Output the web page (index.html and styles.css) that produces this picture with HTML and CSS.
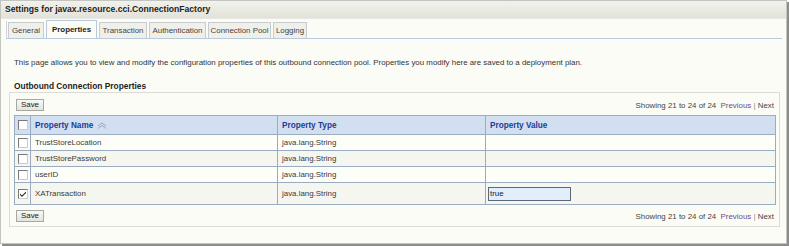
FILE: index.html
```html
<!DOCTYPE html>
<html>
<head>
<meta charset="utf-8">
<link rel="stylesheet" href="styles.css">
</head>
<body>
<div class="frame">
  <div class="titlebar">Settings for javax.resource.cci.ConnectionFactory</div>
  <div class="tabs">
    <span class="tab t1">General</span>
    <span class="tab t2 active">Properties</span>
    <span class="tab t3">Transaction</span>
    <span class="tab t4">Authentication</span>
    <span class="tab t5">Connection Pool</span>
    <span class="tab t6">Logging</span>
  </div>
  <p class="intro">This page allows you to view and modify the configuration properties of this outbound connection pool. Properties you modify here are saved to a deployment plan.</p>
  <h2 class="section">Outbound Connection Properties</h2>
  <div class="panel">
    <div class="toolbar">
      <span class="btn">Save</span>
      <span class="pager">Showing 21 to 24 of 24 &nbsp;<span class="prev">Previous</span> <span class="sep">|</span> <span class="next">Next</span></span>
    </div>
    <table class="grid">
      <colgroup><col class="c0"><col class="c1"><col class="c2"><col class="c3"></colgroup>
      <thead>
        <tr>
          <th class="chk"><span class="cb"></span></th>
          <th>Property Name <svg class="sort" width="10" height="7" viewBox="0 0 10 7"><path d="M1 4 L5 1 L9 4 M1 6.5 L5 3.5 L9 6.5" fill="none" stroke="#9aa6c0" stroke-width="1"/></svg></th>
          <th>Property Type</th>
          <th>Property Value</th>
        </tr>
      </thead>
      <tbody>
        <tr class="r1"><td class="chk"><span class="cb"></span></td><td>TrustStoreLocation</td><td>java.lang.String</td><td></td></tr>
        <tr class="r2"><td class="chk"><span class="cb"></span></td><td>TrustStorePassword</td><td>java.lang.String</td><td></td></tr>
        <tr class="r1"><td class="chk"><span class="cb"></span></td><td>userID</td><td>java.lang.String</td><td></td></tr>
        <tr class="r2 tall"><td class="chk"><span class="cb checked"><svg width="8" height="8" viewBox="0 0 8 8"><path d="M1 3.5 L3 5.5 L7 1.5 L7 3 L3 7 L1 5 Z" fill="#222"/></svg></span></td><td>XATransaction</td><td>java.lang.String</td><td><span class="field">true</span></td></tr>
      </tbody>
    </table>
    <div class="toolbar bottom">
      <span class="btn">Save</span>
      <span class="pager">Showing 21 to 24 of 24 &nbsp;<span class="prev">Previous</span> <span class="sep">|</span> <span class="next">Next</span></span>
    </div>
  </div>
</div>
</body>
</html>
```
FILE: styles.css
```css
html, body { margin: 0; padding: 0; background: #ffffff; }
body {
  font-family: "Liberation Sans", Arial, sans-serif;
  font-size: 7.9px;
  color: #333;
  width: 789px;
  height: 246px;
  overflow: hidden;
}
.frame {
  box-sizing: border-box;
  width: 787px;
  height: 244px;
  border: 1px solid #c4c4c0;
  background: #fcfcf6;
  box-shadow: 2px 2px 0 #8c8c8c;
}
.titlebar {
  height: 17px;
  line-height: 17px;
  padding-left: 4px;
  font-weight: bold;
  font-size: 8.6px;
  color: #222;
  background: linear-gradient(#f2f2ec, #e2e2da);
  border-bottom: 1px solid #e8e8e2;
}
.tabs {
  display: flex;
  align-items: flex-end;
  gap: 2px;
  margin: 2px 4px 0 5px;
  padding-left: 1px;
  height: 17px;
  border-bottom: 1px solid #b8cadc;
  border-left: 1px solid #cfd4d8;
}
.tab {
  box-sizing: border-box;
  height: 16px;
  line-height: 15px;
  border: 1px solid #c8ccd0;
  border-bottom: none;
  background: #f0f0ea;
  color: #444;
  text-align: center;
}
.tab.active {
  height: 18px;
  line-height: 18px;
  background: #fcfcf6;
  font-weight: bold;
  color: #222;
  border-color: #b8c8d8;
}
.t1 { width: 36px; }
.t2 { width: 51px; }
.t3 { width: 48px; }
.t4 { width: 57px; }
.t5 { width: 63px; }
.t6 { width: 34px; }
.intro {
  margin: 19px 0 0 13px;
  line-height: 10px;
  color: #333;
}
.section {
  margin: 13px 0 0 13px;
  font-size: 8.4px;
  line-height: 10px;
  font-weight: bold;
  color: #1e1e1e;
}
.panel {
  box-sizing: border-box;
  margin: 1px 6px 0 8px;
  height: 135px;
  border: 1px solid #dcdcd4;
  padding: 6px 3px 0 4px;
}
.toolbar {
  display: flex;
  justify-content: space-between;
  align-items: center;
  height: 12px;
  margin-left: 2px;
  margin-right: 2px;
}
.toolbar.bottom { margin-top: 5px; }
.btn {
  box-sizing: border-box;
  width: 28px;
  height: 12px;
  line-height: 10px;
  text-align: center;
  border: 1px solid #a8a8a2;
  background: linear-gradient(#f8f8f4, #e4e4de);
  color: #222;
}
.pager { color: #444; white-space: pre; }
.prev { color: #6a4c8c; }
.sep { color: #888; }
.next { color: #444; }
.grid {
  margin-top: 4px;
  width: 762px;
  border-collapse: collapse;
  border: 1px solid #8a9cb4;
}
.c0 { width: 16px; }
.c1 { width: 247px; }
.c2 { width: 208px; }
.grid th, .grid td {
  border: 1px solid #9aacc2;
  padding: 0 0 0 4px;
  text-align: left;
  vertical-align: middle;
  box-sizing: border-box;
}
.grid th {
  height: 19px;
  background: #d2dff0;
  color: #1f3a96;
  font-weight: bold;
  font-size: 8.2px;
}
.grid td { height: 16px; color: #3a3a3a; }
.grid tr.tall td { height: 22px; }
.r1 td { background: #fefef9; }
.r2 td { background: #f6f6f0; }
.grid .chk { padding: 0; text-align: center; }
.cb {
  display: inline-block;
  box-sizing: border-box;
  width: 10px;
  height: 10px;
  border: 1px solid #777;
  border-right-color: #ccc;
  border-bottom-color: #ccc;
  background: #fff;
  vertical-align: middle;
  position: relative;
}
.cb svg { position: absolute; left: 0; top: 0; }
.sort { vertical-align: middle; margin-left: 1px; }
.field {
  display: inline-block;
  box-sizing: border-box;
  width: 83px;
  height: 14px;
  line-height: 12px;
  border: 1px solid #5a6878;
  background: #e2eefa;
  padding-left: 1px;
  color: #222;
  margin-left: -2px;
}
```
